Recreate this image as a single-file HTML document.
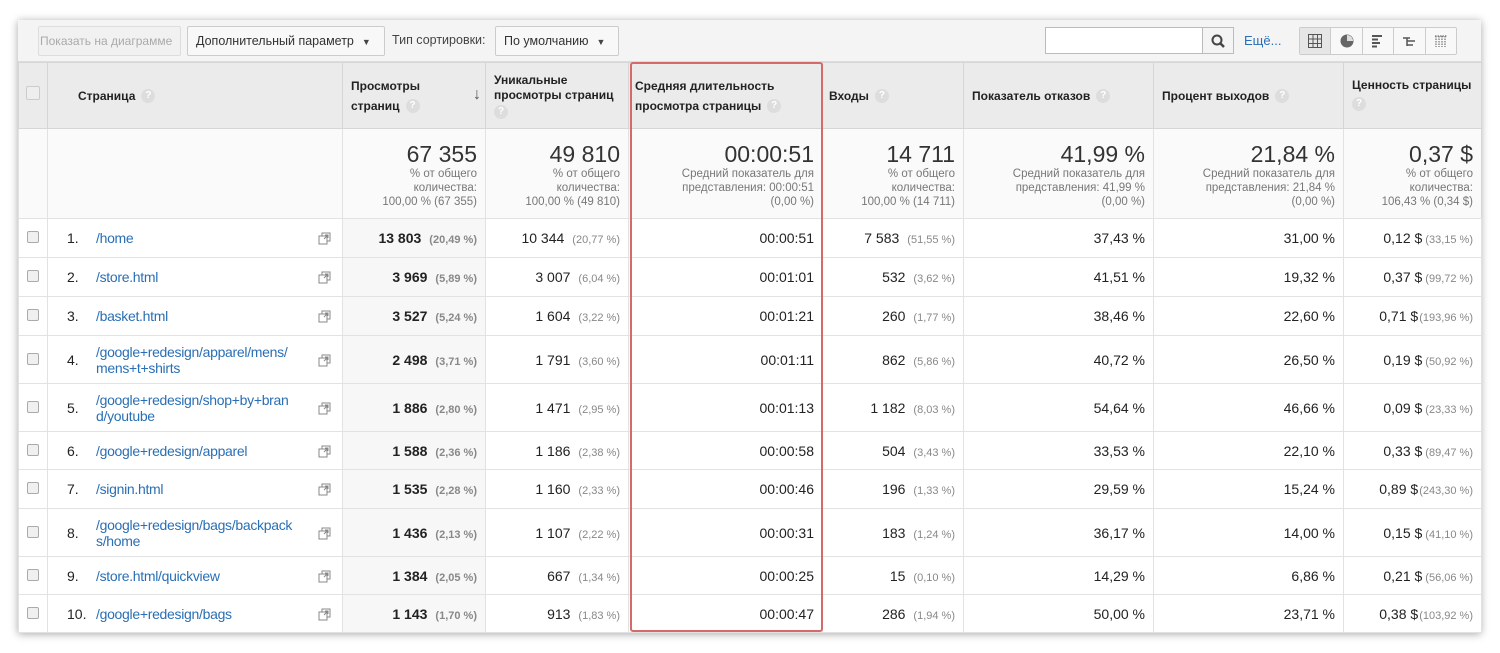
<!DOCTYPE html>
<html><head><meta charset="utf-8"><style>
*{box-sizing:border-box;margin:0;padding:0}
body{width:1500px;height:653px;background:#fff;font-family:"Liberation Sans",Arial,sans-serif;color:#222;position:relative;overflow:hidden}
.frame{position:absolute;left:18px;top:20px;width:1463px;height:613px;background:#fff;box-shadow:0 1px 8px rgba(0,0,0,.35);overflow:hidden}
.tb{position:absolute;left:0;top:0;width:1463px;height:42px;background:#f4f4f4;border-bottom:1px solid #ddd}
.btn{position:absolute;top:6px;height:30px;border:1px solid #ccc;border-radius:2px;background:#f8f8f8;font-size:12.5px;line-height:28px;padding:0 8px;color:#333}
.arr{font-size:9px;margin-left:8px;color:#444}
table{position:absolute;left:0;top:42px;border-collapse:collapse;table-layout:fixed;width:1463px}
td{border:1px solid #e2e2e2;font-size:14px;vertical-align:middle;padding:0 8px;text-align:right;white-space:nowrap}
tr.h td{background:#ebebeb;height:66px;font-size:12px;font-weight:bold;text-align:left;color:#222;line-height:20px;border-color:#d6d6d6}
tr.s td{background:#fafafa;height:90px;vertical-align:top;padding-top:12px;color:#777;font-size:11.5px;line-height:14px}
tr.s .big{font-size:23px;color:#333;line-height:26px}
.q{display:inline-block;width:14px;height:14px;border-radius:50%;background:#ddd;color:#fff;font-size:10px;text-align:center;line-height:14px;margin-left:6px;vertical-align:middle;font-weight:bold}
.pct{font-size:11px;color:#888;margin-left:8px}
tr.d td.pv{background:#f7f7f7;font-weight:bold}
tr.d td.pv .pct{font-weight:bold}
.cb{display:inline-block;width:12px;height:12px;border:1px solid #aaa;border-radius:2px;background:#f0f0f0}
td.pg{text-align:left;position:relative}
td.pg .n{position:absolute;left:19px;top:50%;transform:translateY(-50%)}
td.pg .l{display:block;margin-left:40px;color:#2a6fb5;font-size:14px;letter-spacing:-0.3px;line-height:16px;white-space:nowrap}
td.pg .ic{position:absolute;right:10px;top:50%;transform:translateY(-50%);width:14px;height:14px}
.icons{position:absolute;left:1281px;top:7px;width:158px;height:28px;border:1px solid #ccc;border-radius:2px;background:#f8f8f8;display:flex}
.icons div{flex:1;border-right:1px solid #ccc;display:flex;align-items:center;justify-content:center}
.icons div:last-child{border-right:0}
</style></head><body>
<div class="frame">
<div class="tb">
<div class="btn" style="left:20px;width:143px;color:#aaa;background:#f1f1f1;border-color:#ddd;font-size:12px;padding:0 1px">Показать на диаграмме</div>
<div class="btn" style="left:169px;width:198px">Дополнительный параметр<span class="arr">▼</span></div>
<div style="position:absolute;left:374px;top:13px;font-size:12.5px;color:#444">Тип сортировки:</div>
<div class="btn" style="left:477px;width:124px">По умолчанию<span class="arr">▼</span></div>
<div style="position:absolute;left:1027px;top:7px;width:158px;height:27px;border:1px solid #bbb;background:#fff"></div>
<div style="position:absolute;left:1185px;top:7px;width:31px;height:27px;border:1px solid #bbb;border-left:0;background:#f4f4f4">
<svg width="31" height="27"><circle cx="14" cy="12" r="4.5" fill="none" stroke="#444" stroke-width="2"/><path d="M17 15l4 4" stroke="#444" stroke-width="2.5"/></svg></div>
<div style="position:absolute;left:1226px;top:13px;font-size:13px;color:#2a6fb5">Ещё...</div>
<div class="icons">
<div style="background:#e6e6e6"><svg width="14" height="14"><path d="M.5 .5h13v13H.5zM.5 5h13M.5 9.5h13M5 .5v13M9.5 .5v13" fill="none" stroke="#555"/></svg></div>
<div><svg width="14" height="14"><circle cx="7" cy="7" r="6.5" fill="#666"/><path d="M7 7V1A6 6 0 0 1 13 7z" fill="#ddd"/></svg></div>
<div><svg width="14" height="14"><path d="M1 2h10M1 5.5h6M1 9h8M1 12.5h5" stroke="#555" stroke-width="2"/></svg></div>
<div><svg width="14" height="14"><path d="M1 4h7M5 4v8M5 7h8M5 11h6" stroke="#555" stroke-width="1.5"/></svg></div>
<div><svg width="14" height="14"><path d="M2 2v11M5 2v11M8 2v11M11 2v11M1 2h12" stroke="#555" stroke-width="1" stroke-dasharray="1.5 1"/></svg></div>
</div>
</div>
<table>
<colgroup><col style="width:29px"><col style="width:295px"><col style="width:143px"><col style="width:143px"><col style="width:194px"><col style="width:141px"><col style="width:190px"><col style="width:190px"><col style="width:138px"></colgroup>
<tr class="h"><td style="text-align:center;padding:0"><span class="cb" style="width:14px;height:14px;border-color:#ccc;background:#eee"></span></td>
<td style="padding-left:30px">Страница<span class="q">?</span></td>
<td style="position:relative">Просмотры<br>страниц<span class="q">?</span><span style="position:absolute;right:4px;top:22px;font-size:16px;color:#555">↓</span></td>
<td style="line-height:15px">Уникальные<br>просмотры страниц<br><span class="q" style="margin:2px 0 0">?</span></td>
<td style="padding-left:6px">Средняя длительность<br>просмотра страницы<span class="q">?</span></td>
<td style="padding-left:6px">Входы<span class="q">?</span></td>
<td>Показатель отказов<span class="q">?</span></td>
<td>Процент выходов<span class="q">?</span></td>
<td style="line-height:17px;vertical-align:top;padding-top:14px">Ценность страницы<br><span class="q" style="margin:2px 0 0">?</span></td></tr>
<tr class="s"><td></td><td></td>
<td><div class="big">67 355</div>% от общего<br>количества:<br>100,00 % (67 355)</td>
<td><div class="big">49 810</div>% от общего<br>количества:<br>100,00 % (49 810)</td>
<td><div class="big">00:00:51</div>Средний показатель для<br>представления: 00:00:51<br>(0,00 %)</td>
<td><div class="big">14 711</div>% от общего<br>количества:<br>100,00 % (14 711)</td>
<td><div class="big">41,99 %</div>Средний показатель для<br>представления: 41,99 %<br>(0,00 %)</td>
<td><div class="big">21,84 %</div>Средний показатель для<br>представления: 21,84 %<br>(0,00 %)</td>
<td><div class="big">0,37 $</div>% от общего<br>количества:<br>106,43 % (0,34 $)</td></tr>
</table>
</div>
<table style="position:absolute;left:18px;top:218px;width:1463px">
<colgroup><col style="width:29px"><col style="width:295px"><col style="width:143px"><col style="width:143px"><col style="width:194px"><col style="width:141px"><col style="width:190px"><col style="width:190px"><col style="width:138px"></colgroup>
<tr class="d" style="height:39px"><td style="text-align:center;padding:0"><span class="cb"></span></td><td class="pg"><span class="n">1.</span><span class="l">/home</span><svg class="ic"><path d="M1 5h3V2h8v8H9v3H1zM4 5h5v5" fill="none" stroke="#888"/><path d="M6 8l4-4M7 4h3v3" stroke="#888" fill="none"/></svg></td><td class="pv">13 803<span class="pct">(20,49 %)</span></td><td>10 344<span class="pct">(20,77 %)</span></td><td>00:00:51</td><td>7 583<span class="pct">(51,55 %)</span></td><td>37,43 %</td><td>31,00 %</td><td>0,12 $<span class="pct" style="margin-left:3px">(33,15 %)</span></td></tr>
<tr class="d" style="height:39px"><td style="text-align:center;padding:0"><span class="cb"></span></td><td class="pg"><span class="n">2.</span><span class="l">/store.html</span><svg class="ic"><path d="M1 5h3V2h8v8H9v3H1zM4 5h5v5" fill="none" stroke="#888"/><path d="M6 8l4-4M7 4h3v3" stroke="#888" fill="none"/></svg></td><td class="pv">3 969<span class="pct">(5,89 %)</span></td><td>3 007<span class="pct">(6,04 %)</span></td><td>00:01:01</td><td>532<span class="pct">(3,62 %)</span></td><td>41,51 %</td><td>19,32 %</td><td>0,37 $<span class="pct" style="margin-left:3px">(99,72 %)</span></td></tr>
<tr class="d" style="height:39px"><td style="text-align:center;padding:0"><span class="cb"></span></td><td class="pg"><span class="n">3.</span><span class="l">/basket.html</span><svg class="ic"><path d="M1 5h3V2h8v8H9v3H1zM4 5h5v5" fill="none" stroke="#888"/><path d="M6 8l4-4M7 4h3v3" stroke="#888" fill="none"/></svg></td><td class="pv">3 527<span class="pct">(5,24 %)</span></td><td>1 604<span class="pct">(3,22 %)</span></td><td>00:01:21</td><td>260<span class="pct">(1,77 %)</span></td><td>38,46 %</td><td>22,60 %</td><td>0,71 $<span class="pct" style="margin-left:1px">(193,96 %)</span></td></tr>
<tr class="d" style="height:48px"><td style="text-align:center;padding:0"><span class="cb"></span></td><td class="pg"><span class="n">4.</span><span class="l">/google+redesign/apparel/mens/<br>mens+t+shirts</span><svg class="ic"><path d="M1 5h3V2h8v8H9v3H1zM4 5h5v5" fill="none" stroke="#888"/><path d="M6 8l4-4M7 4h3v3" stroke="#888" fill="none"/></svg></td><td class="pv">2 498<span class="pct">(3,71 %)</span></td><td>1 791<span class="pct">(3,60 %)</span></td><td>00:01:11</td><td>862<span class="pct">(5,86 %)</span></td><td>40,72 %</td><td>26,50 %</td><td>0,19 $<span class="pct" style="margin-left:3px">(50,92 %)</span></td></tr>
<tr class="d" style="height:48px"><td style="text-align:center;padding:0"><span class="cb"></span></td><td class="pg"><span class="n">5.</span><span class="l">/google+redesign/shop+by+bran<br>d/youtube</span><svg class="ic"><path d="M1 5h3V2h8v8H9v3H1zM4 5h5v5" fill="none" stroke="#888"/><path d="M6 8l4-4M7 4h3v3" stroke="#888" fill="none"/></svg></td><td class="pv">1 886<span class="pct">(2,80 %)</span></td><td>1 471<span class="pct">(2,95 %)</span></td><td>00:01:13</td><td>1 182<span class="pct">(8,03 %)</span></td><td>54,64 %</td><td>46,66 %</td><td>0,09 $<span class="pct" style="margin-left:3px">(23,33 %)</span></td></tr>
<tr class="d" style="height:38px"><td style="text-align:center;padding:0"><span class="cb"></span></td><td class="pg"><span class="n">6.</span><span class="l">/google+redesign/apparel</span><svg class="ic"><path d="M1 5h3V2h8v8H9v3H1zM4 5h5v5" fill="none" stroke="#888"/><path d="M6 8l4-4M7 4h3v3" stroke="#888" fill="none"/></svg></td><td class="pv">1 588<span class="pct">(2,36 %)</span></td><td>1 186<span class="pct">(2,38 %)</span></td><td>00:00:58</td><td>504<span class="pct">(3,43 %)</span></td><td>33,53 %</td><td>22,10 %</td><td>0,33 $<span class="pct" style="margin-left:3px">(89,47 %)</span></td></tr>
<tr class="d" style="height:39px"><td style="text-align:center;padding:0"><span class="cb"></span></td><td class="pg"><span class="n">7.</span><span class="l">/signin.html</span><svg class="ic"><path d="M1 5h3V2h8v8H9v3H1zM4 5h5v5" fill="none" stroke="#888"/><path d="M6 8l4-4M7 4h3v3" stroke="#888" fill="none"/></svg></td><td class="pv">1 535<span class="pct">(2,28 %)</span></td><td>1 160<span class="pct">(2,33 %)</span></td><td>00:00:46</td><td>196<span class="pct">(1,33 %)</span></td><td>29,59 %</td><td>15,24 %</td><td>0,89 $<span class="pct" style="margin-left:1px">(243,30 %)</span></td></tr>
<tr class="d" style="height:48px"><td style="text-align:center;padding:0"><span class="cb"></span></td><td class="pg"><span class="n">8.</span><span class="l">/google+redesign/bags/backpack<br>s/home</span><svg class="ic"><path d="M1 5h3V2h8v8H9v3H1zM4 5h5v5" fill="none" stroke="#888"/><path d="M6 8l4-4M7 4h3v3" stroke="#888" fill="none"/></svg></td><td class="pv">1 436<span class="pct">(2,13 %)</span></td><td>1 107<span class="pct">(2,22 %)</span></td><td>00:00:31</td><td>183<span class="pct">(1,24 %)</span></td><td>36,17 %</td><td>14,00 %</td><td>0,15 $<span class="pct" style="margin-left:3px">(41,10 %)</span></td></tr>
<tr class="d" style="height:38px"><td style="text-align:center;padding:0"><span class="cb"></span></td><td class="pg"><span class="n">9.</span><span class="l">/store.html/quickview</span><svg class="ic"><path d="M1 5h3V2h8v8H9v3H1zM4 5h5v5" fill="none" stroke="#888"/><path d="M6 8l4-4M7 4h3v3" stroke="#888" fill="none"/></svg></td><td class="pv">1 384<span class="pct">(2,05 %)</span></td><td>667<span class="pct">(1,34 %)</span></td><td>00:00:25</td><td>15<span class="pct">(0,10 %)</span></td><td>14,29 %</td><td>6,86 %</td><td>0,21 $<span class="pct" style="margin-left:3px">(56,06 %)</span></td></tr>
<tr class="d" style="height:38px"><td style="text-align:center;padding:0"><span class="cb"></span></td><td class="pg"><span class="n">10.</span><span class="l">/google+redesign/bags</span><svg class="ic"><path d="M1 5h3V2h8v8H9v3H1zM4 5h5v5" fill="none" stroke="#888"/><path d="M6 8l4-4M7 4h3v3" stroke="#888" fill="none"/></svg></td><td class="pv">1 143<span class="pct">(1,70 %)</span></td><td>913<span class="pct">(1,83 %)</span></td><td>00:00:47</td><td>286<span class="pct">(1,94 %)</span></td><td>50,00 %</td><td>23,71 %</td><td>0,38 $<span class="pct" style="margin-left:1px">(103,92 %)</span></td></tr>
</table>
<div style="position:absolute;left:630px;top:62px;width:193px;height:570px;border:2px solid #d46a6a;border-radius:3px"></div>
</body></html>
